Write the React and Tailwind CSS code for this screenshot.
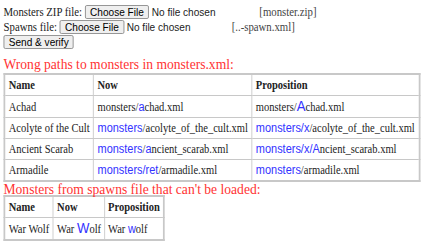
const wrong = [
  {
    name: 'Achad',
    now: [['t', 'monsters/'], ['b', 'a'], ['t', 'chad.xml']],
    prop: [['t', 'monsters/'], ['B', 'A'], ['t', 'chad.xml']],
  },
  {
    name: 'Acolyte of the Cult',
    now: [['b', 'monsters'], ['t', '/acolyte_of_the_cult.xml']],
    prop: [['b', 'monsters/x'], ['t', '/acolyte_of_the_cult.xml']],
  },
  {
    name: 'Ancient Scarab',
    now: [['b', 'monsters'], ['t', '/'], ['b', 'a'], ['t', 'ncient_scarab.xml']],
    prop: [['b', 'monsters/x/A'], ['t', 'ncient_scarab.xml']],
  },
  {
    name: 'Armadile',
    now: [['b', 'monsters/ret'], ['t', '/armadile.xml']],
    prop: [['b', 'monsters'], ['t', '/armadile.xml']],
  },
]

function Parts({ parts }) {
  return parts.map(([k, s], i) =>
    k === 't' ? (
      <span key={i}>{s}</span>
    ) : k === 'B' ? (
      <span key={i} className="font-['Liberation_Sans',sans-serif] text-[15px] text-[#3333ff]">{s}</span>
    ) : (
      <span key={i} className="font-['Liberation_Sans',sans-serif] text-[12.5px] text-[#3333ff]">{s}</span>
    )
  )
}

function Boton({ children }) {
  return (
    <span className="inline-block rounded-[2px] border border-[#8f8f8f] bg-[#efefef] px-[5px] py-[1px] font-['Liberation_Sans',sans-serif] text-[11.5px] leading-[10px] text-black">
      {children}
    </span>
  )
}

const th = 'border border-[#c8c8c8] px-[4px] py-[3px] text-left font-bold'
const td = 'border border-[#c8c8c8] px-[4px] py-[3px] whitespace-nowrap'

export default function App() {
  return (
    <div className="h-[250px] w-[438px] overflow-hidden bg-white">
      <div className="w-[500px] origin-top-left scale-x-[0.876] px-[4px] pt-[5px] font-['Liberation_Serif',serif] text-[12.3px] leading-[14px] text-[#222]">
        <div className="flex items-center">
          <span>Monsters ZIP file:&nbsp;</span>
          <Boton>Choose File</Boton>
          <span className="ml-[3px] font-['Liberation_Sans',sans-serif] text-[11.5px]">No file chosen</span>
          <span className="ml-[50px] text-[#444]">[monster.zip]</span>
        </div>
        <div className="mt-[1px] flex items-center">
          <span>Spawns file:&nbsp;</span>
          <Boton>Choose File</Boton>
          <span className="ml-[3px] font-['Liberation_Sans',sans-serif] text-[11.5px]">No file chosen</span>
          <span className="ml-[47px] text-[#444]">[..-spawn.xml]</span>
        </div>
        <div className="mt-[1px]">
          <Boton>Send &amp; verify</Boton>
        </div>

        <h2 className="mt-[6px] font-['Liberation_Serif',serif] text-[15.5px] leading-[18px] text-[#ff3333]">
          Wrong paths to monsters in monsters.xml:
        </h2>
        <table className="border-collapse border-2 border-[#c8c8c8] text-[12px]">
          <thead>
            <tr>
              <th className={th}>Name</th>
              <th className={th}>Now</th>
              <th className={th}>Proposition</th>
            </tr>
          </thead>
          <tbody>
            {wrong.map((r) => (
              <tr key={r.name}>
                <td className={td}>{r.name}</td>
                <td className={td}>
                  <Parts parts={r.now} />
                </td>
                <td className={td}>
                  <Parts parts={r.prop} />
                </td>
              </tr>
            ))}
          </tbody>
        </table>

        <h2 className="font-['Liberation_Serif',serif] text-[15.5px] leading-[13px] text-[#ff3333]">
          Monsters from spawns file that can't be loaded:
        </h2>
        <table className="border-collapse border-2 border-[#c8c8c8] text-[12px]">
          <thead>
            <tr>
              <th className="border border-[#c8c8c8] px-[4px] py-[3px] text-left font-bold">Name</th>
              <th className="border border-[#c8c8c8] px-[4px] py-[3px] text-left font-bold">Now</th>
              <th className="border border-[#c8c8c8] px-[3px] py-[3px] text-left font-bold">Proposition</th>
            </tr>
          </thead>
          <tbody>
            <tr>
              <td className={td}>War Wolf</td>
              <td className={td}>
                War <span className="font-['Liberation_Sans',sans-serif] text-[15px] text-[#3333ff]">W</span>olf
              </td>
              <td className="border border-[#c8c8c8] px-[3px] py-[3px] whitespace-nowrap">
                War <span className="font-['Liberation_Sans',sans-serif] text-[12.5px] text-[#3333ff]">w</span>olf
              </td>
            </tr>
          </tbody>
        </table>
      </div>
    </div>
  )
}
